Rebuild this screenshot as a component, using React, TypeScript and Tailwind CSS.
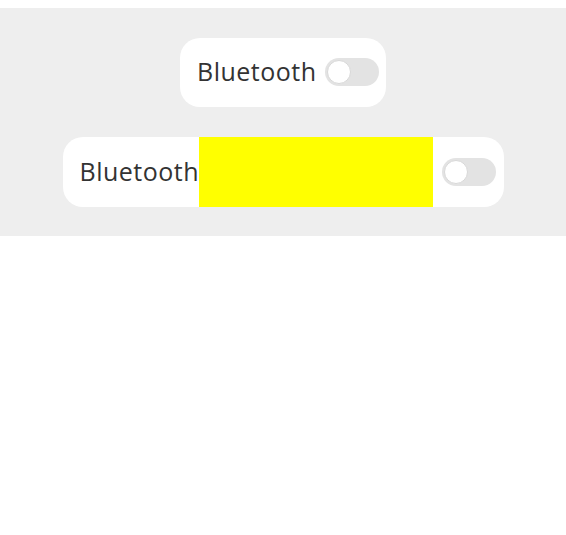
import React from 'react';

function Toggle() {
  return (
    <div className="relative h-[28px] w-[54px] shrink-0 rounded-full bg-[#e3e3e3]">
      <div className="absolute left-[2px] top-[2px] h-[24px] w-[24px] rounded-full border border-[#d8d8d8] bg-white" />
    </div>
  );
}

export default function App() {
  return (
    <div className="min-h-screen bg-white pt-[8px]" style={{ fontFamily: "'Open Sans', 'Noto Sans', sans-serif" }}>
      <div className="flex flex-col items-center gap-[30px] bg-[#eeeeee] pb-[29px] pt-[30px]">
        <div className="flex h-[69px] w-[206px] items-center gap-[8px] rounded-[20px] bg-white pb-[2px] pl-[17px] pr-[9px]">
          <span className="text-[25px] leading-none tracking-[0.5px] text-[#333333]">Bluetooth</span>
          <Toggle />
        </div>
        <div className="flex h-[70px] w-[441px] items-stretch overflow-hidden rounded-[20px] bg-white pl-[17px] pr-[8px]">
          <span className="flex items-center pb-[2px] text-[25px] leading-none tracking-[0.5px] text-[#333333]">Bluetooth</span>
          <div className="w-[234px] shrink-0 bg-[#ffff00]" />
          <div className="flex flex-1 items-center justify-end">
            <Toggle />
          </div>
        </div>
      </div>
    </div>
  );
}
